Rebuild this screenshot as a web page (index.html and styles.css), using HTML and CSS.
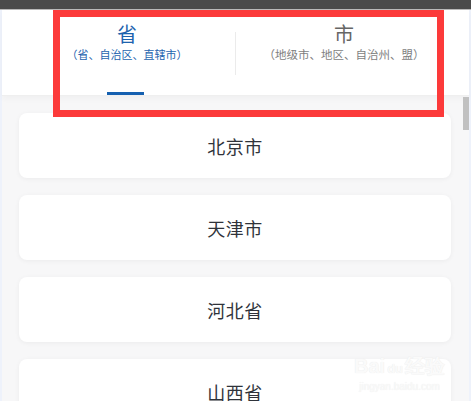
FILE: index.html
```html
<!doctype html>
<html>
  <head>
    <meta charset="utf-8" />
    <link rel="stylesheet" href="styles.css">
  </head>
  <body>
    <div class="topbar"></div>
    <div class="screen">
      <div class="header">
        <div class="tab active">
          <div class="tab-title">省</div>
          <div class="tab-sub">（省、自治区、直辖市）</div>
          <div class="tab-line"></div>
        </div>
        <div class="tab-divider"></div>
        <div class="tab">
          <div class="tab-title">市</div>
          <div class="tab-sub">（地级市、地区、自治州、盟）</div>
          <div class="tab-line"></div>
        </div>
      </div>

      <div class="list">
        <div class="card">北京市</div>
        <div class="card">天津市</div>
        <div class="card">河北省</div>
        <div class="card">山西省</div>
      </div>

      <div class="scroll-thumb"></div>
      <div class="mark-box"></div>
      <div class="watermark">
        <div class="wm-logo">Bai<span class="wm-du">du</span>经验</div>
        <div class="wm-url">jingyan.baidu.com</div>
      </div>
    </div>
  </body>
</html>
```

FILE: styles.css
```css
* {
  box-sizing: border-box;
}

body {
  margin: 0;
  width: 471px;
  height: 401px;
  overflow: hidden;
  background: #f7f7f8;
  font-family: 'Noto Sans CJK SC', 'Noto Sans', sans-serif;
}

/* Top bar */
.topbar {
  height: 10px;
  background: #4a4a4a;
  border-bottom: 1px solid #b9b9b9;
}

.screen {
  position: relative;
  height: 391px;
  border-left: 2px solid #eef2fb;
  border-right: 2px solid #eef2fb;
}

/* Tabs header */
.header {
  display: flex;
  padding: 0 17px 0 17px;
  background: #fff;
  border-bottom: 1px solid #efefef;
  box-shadow: 0 3px 6px rgba(0, 0, 0, 0.03);
}

.tab {
  flex: 1;
  display: flex;
  flex-direction: column;
  align-items: center;
  padding-top: 12px;
  color: #666;
}

.tab.active {
  color: #1d63ae;
}

.tab-title {
  font-size: 20px;
  line-height: 24px;
}

.tab-sub {
  font-size: 11.5px;
  line-height: 16px;
  color: #7e7e7e;
}

.tab.active .tab-sub {
  font-size: 11px;
  color: #1d63ae;
}

.tab-line {
  width: 37px;
  height: 3px;
  margin-top: 30px;
  margin-right: 4px;
}

.tab.active .tab-line {
  background: #1560b0;
}

.tab-divider {
  width: 1px;
  height: 43px;
  margin-top: 22px;
  background: #ebebeb;
}

/* Region list */
.list {
  display: flex;
  flex-direction: column;
  gap: 17px;
  padding: 17px 18px 0 17px;
}

.card {
  height: 65px;
  display: flex;
  align-items: center;
  justify-content: center;
  background: #fff;
  border-radius: 8px;
  box-shadow: 0 1px 5px rgba(0, 0, 0, 0.05);
  font-size: 18px;
  color: #2f333a;
  letter-spacing: 0.5px;
}

/* Overlays */
.scroll-thumb {
  position: absolute;
  top: 87px;
  right: 0;
  width: 6px;
  height: 33px;
  background: #c1c1c1;
}

.mark-box {
  position: absolute;
  left: 51px;
  top: 0;
  width: 391px;
  height: 107px;
  border: 7px solid #fc3a3a;
}

.watermark {
  position: absolute;
  left: 352px;
  top: 345px;
  color: #fafafa;
  text-align: center;
  text-shadow: 0 0 1px #e6e6e6;
}

.wm-logo {
  font-family: 'Liberation Sans', sans-serif;
  font-size: 20px;
  line-height: 22px;
  font-weight: 700;
}

.wm-du {
  font-size: 13px;
  margin: 0 2px;
}

.wm-url {
  font-family: 'Liberation Sans', sans-serif;
  font-size: 10px;
  line-height: 14px;
}
```
